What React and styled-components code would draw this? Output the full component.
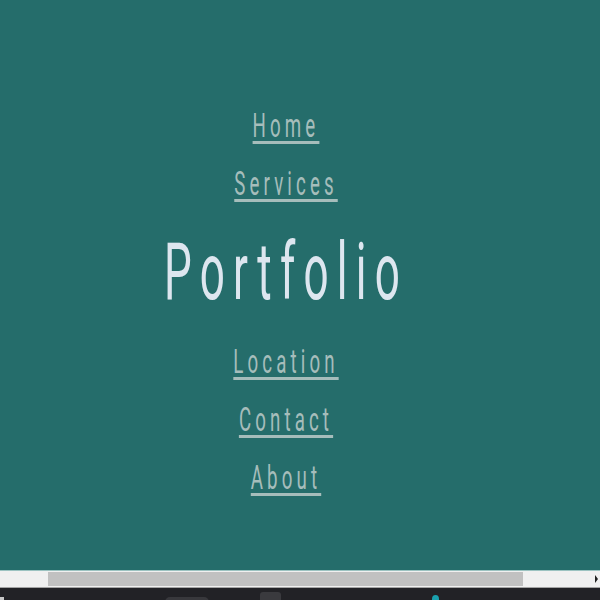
import styled, { createGlobalStyle } from 'styled-components'

const links = ['Home', 'Services', 'Portfolio', 'Location', 'Contact', 'About']
const current = 'Portfolio'

const GlobalStyle = createGlobalStyle`
    html, body {
        margin: 0;
        padding: 0;
        height: 600px;
        overflow: hidden;
        background: #222226;
    }
`

function App() {
    return (
        <Screen>
            <GlobalStyle />
            <Page>
                <Nav>
                    {links.map((l) =>
                        l === current
                            ? <Title key={l}>{l}</Title>
                            : <NavLink key={l} href={'#' + l.toLowerCase()}>{l}</NavLink>
                    )}
                </Nav>
            </Page>
            <Scrollbar>
                <Thumb />
                <Arrow />
            </Scrollbar>
            <Taskbar>
                <Tick />
                <Pill />
                <Square />
                <Dot />
            </Taskbar>
        </Screen>
    )
}

export default App

const Screen = styled.div`
    width: 600px;
    height: 600px;
    display: flex;
    flex-direction: column;
    overflow: hidden;
`
const Page = styled.main`
    height: 570px;
    background: #256d6b;
    border-bottom: 1px solid #9cc3c1;
    display: flex;
    overflow: hidden;
`
const Nav = styled.nav`
    width: 572px;
    padding-top: 96px;
    display: flex;
    flex-direction: column;
    align-items: center;
    transform: scaleX(0.55);
    transform-origin: center top;
    font-family: Roboto, "Liberation Sans", sans-serif;
`
const NavLink = styled.a`
    display: block;
    font-size: 34px;
    line-height: 58px;
    letter-spacing: 7.5px;
    color: #a6bdbb;
    text-decoration: underline;
    text-decoration-thickness: 3px;
    text-underline-offset: 4px;
`
const Title = styled.h1`
    margin: 0;
    font-size: 80px;
    font-weight: 400;
    line-height: 120px;
    letter-spacing: 15px;
    color: #dde6ef;
`
const Scrollbar = styled.div`
    height: 16px;
    background: #f0f0f0;
    border-bottom: 1px solid #a4a4a4;
    display: flex;
    align-items: center;
`
const Thumb = styled.div`
    margin-left: 48px;
    width: 475px;
    height: 14px;
    background: #c1c1c1;
`
const Arrow = styled.div`
    margin-left: auto;
    margin-right: 2px;
    width: 0;
    height: 0;
    border-top: 4px solid transparent;
    border-bottom: 4px solid transparent;
    border-left: 3px solid #202020;
`
const Taskbar = styled.div`
    flex: 1;
    background: #222226;
    display: flex;
    align-items: flex-start;
    overflow: hidden;
`
const Tick = styled.div`
    margin-top: 9px;
    width: 4px;
    height: 3px;
    background: #c8c8c8;
`
const Pill = styled.div`
    margin: 9px 0 0 161px;
    width: 44px;
    height: 10px;
    border-radius: 5px 5px 0 0;
    background: #38383c;
`
const Square = styled.div`
    margin: 4px 0 0 51px;
    width: 21px;
    height: 12px;
    border-radius: 3px 3px 0 0;
    background: #3a3a3e;
`
const Dot = styled.div`
    margin: 7px 0 0 151px;
    width: 7px;
    height: 8px;
    border-radius: 50% 50% 0 0;
    background: #1aa0ad;
`
